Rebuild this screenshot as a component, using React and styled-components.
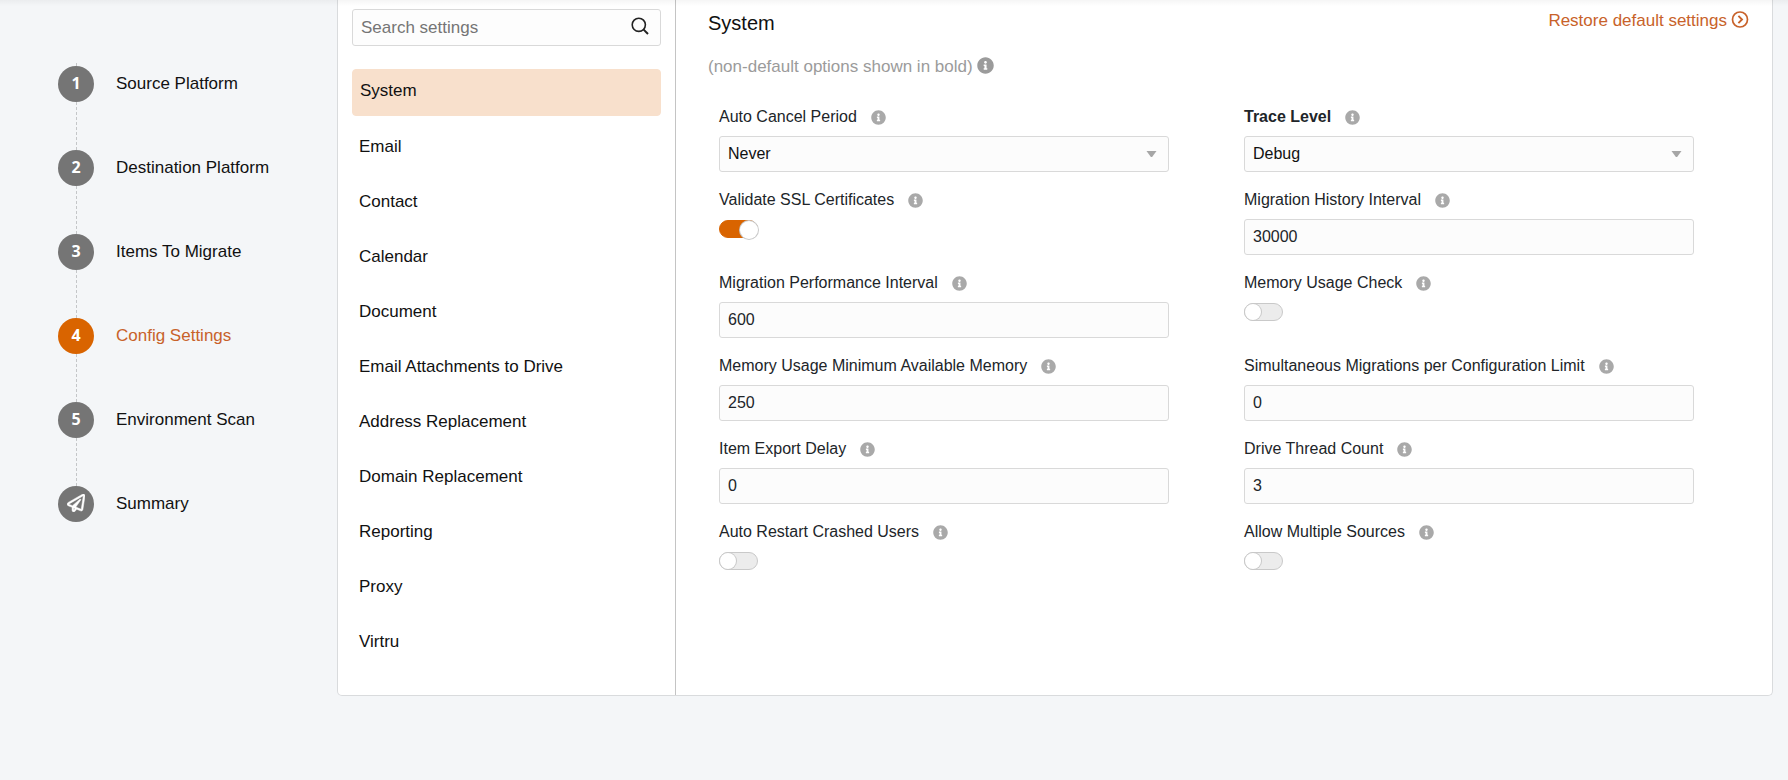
import React, { useState } from 'react'
import styled, { createGlobalStyle } from 'styled-components'
import { FaInfoCircle, FaRegPaperPlane } from 'react-icons/fa'

const GlobalStyle = createGlobalStyle`
  * {
    box-sizing: border-box;
  }

  body {
    margin: 0;
    background: #f4f6f8;
    color: #212529;
    font-family: "Liberation Sans", Arial, sans-serif;
    font-size: 17px;
    line-height: 20px;
  }

  button, input, select {
    font: inherit;
    color: inherit;
  }
`

const Page = styled.div`
  position: relative;
  display: flex;
  align-items: flex-start;
  min-height: 100vh;
  padding-right: 15px;
`

const TopShadow = styled.div`
  position: absolute;
  top: 0;
  left: 0;
  right: 0;
  height: 6px;
  background: linear-gradient(rgba(0, 0, 0, 0.04), rgba(0, 0, 0, 0));
  pointer-events: none;
`

const Steps = styled.ol`
  flex: 0 0 337px;
  display: flex;
  flex-direction: column;
  margin: 0;
  padding: 63px 0 0 58px;
  list-style: none;
`

const StepItem = styled.li`
  display: flex;
  flex-direction: column;
  align-items: flex-start;
`

const StepLine = styled.span`
  width: 1px;
  height: ${({ $short }) => ($short ? 3 : 48)}px;
  margin-left: 18px;
  background: repeating-linear-gradient(#c4c6c8 0 3px, transparent 3px 5px);
`

const StepLink = styled.a`
  display: flex;
  align-items: center;
  gap: 22px;
  color: ${({ $active }) => ($active ? '#c8622a' : '#111')};
  text-decoration: none;
`

const StepCircle = styled.span`
  display: flex;
  align-items: center;
  justify-content: center;
  width: 36px;
  height: 36px;
  padding-bottom: 2px;
  border-radius: 50%;
  background: ${({ $active }) => ($active ? '#d96400' : '#757575')};
  color: #fff;
  font-family: "Open Sans", sans-serif;
  font-size: 16px;
  font-weight: 700;
`

const Card = styled.main`
  flex: 1;
  display: flex;
  min-width: 0;
  border: 1px solid #d9dbdd;
  border-top: 0;
  border-radius: 0 0 5px 5px;
  background: #fff;
`

const Categories = styled.div`
  flex: 0 0 338px;
  padding: 9px 14px 29px;
  border-right: 1px solid #c4c4c4;
`

const SearchBox = styled.label`
  display: flex;
  align-items: center;
  height: 37px;
  padding: 0 11px 3px 8px;
  border: 1px solid #d9d9d9;
  border-radius: 3px;
  background: #fdfdfd;
`

const SearchInput = styled.input`
  flex: 1;
  min-width: 0;
  padding: 3px 0 0;
  border: 0;
  outline: 0;
  background: transparent;

  &::placeholder {
    color: #757575;
    opacity: 1;
  }
`

const CategoryList = styled.nav`
  display: flex;
  flex-direction: column;
  gap: 10px;
  margin-top: 23px;
`

const Category = styled.button`
  padding: 11px 7px 14px;
  border: ${({ $active }) => ($active ? '1px solid #f8e0cc' : '0')};
  border-radius: 4px;
  background: ${({ $active }) => ($active ? '#f8e0cc' : 'transparent')};
  color: #111;
  text-align: left;
  cursor: pointer;
`

const Panel = styled.section`
  flex: 1;
  min-width: 0;
  padding: 10px 14px 0 32px;
`

const PanelHead = styled.header`
  display: flex;
  align-items: flex-start;
  justify-content: space-between;
  padding-right: 9px;
`

const Title = styled.h1`
  margin: 0;
  color: #111;
  font-size: 20px;
  font-weight: 400;
  line-height: 26px;
`

const RestoreLink = styled.a`
  display: flex;
  align-items: flex-start;
  gap: 4px;
  color: #c8622a;
  line-height: 22px;
  text-decoration: none;
`

const Hint = styled.p`
  display: flex;
  align-items: flex-start;
  gap: 4px;
  margin: 21px 0 30px;
  color: #9b9b9b;
`

const Fields = styled.form`
  display: grid;
  grid-template-columns: 1fr 1fr;
  row-gap: 18px;
`

const FieldBox = styled.div`
  min-height: 65px;
  padding: 0 64px 0 11px;
  font-size: 16px;
`

const LabelRow = styled.div`
  display: flex;
  align-items: center;
  gap: 14px;
  margin-bottom: 9px;
  color: #212529;
  font-weight: ${({ $bold }) => ($bold ? 700 : 400)};

  svg {
    color: #a9a9a9;
  }
`

const TextInput = styled.input`
  display: block;
  width: 100%;
  height: 36px;
  padding: 0 8px;
  border: 1px solid #d9d9d9;
  border-radius: 3px;
  background: #fcfcfc;
`

const SelectWrap = styled.div`
  display: flex;
  align-items: center;
  border: 1px solid #d9d9d9;
  border-radius: 3px;
  background: #fcfcfc;
`

const Select = styled.select`
  flex: 1;
  height: 34px;
  padding: 0 8px;
  border: 0;
  appearance: none;
  background: transparent;
  color: #111;
`

const Caret = styled.svg`
  flex: none;
  margin-right: 11px;
  pointer-events: none;
`

const Toggle = styled.input`
  appearance: none;
  display: flex;
  align-items: center;
  width: 39px;
  height: 18px;
  margin: 10px 0 0;
  border: 1px solid #c9c9c9;
  border-radius: 9px;
  background: #ececec;
  cursor: pointer;

  &::before {
    content: "";
    flex: none;
    width: 16px;
    height: 16px;
    border-radius: 50%;
    background: #fff;
    box-shadow: 0 0 0 1px #c9c9c9;
  }

  &:checked {
    border-color: #d96400;
    background: #d96400;
  }

  &:checked::before {
    width: 18px;
    height: 18px;
    margin: 2px 0 0 20px;
  }
`

const steps = [
  { label: 'Source Platform' },
  { label: 'Destination Platform' },
  { label: 'Items To Migrate' },
  { label: 'Config Settings', active: true },
  { label: 'Environment Scan' },
  { label: 'Summary', icon: <FaRegPaperPlane size={18} stroke="#fff" strokeWidth={14} /> },
]

const categories = [
  'System',
  'Email',
  'Contact',
  'Calendar',
  'Document',
  'Email Attachments to Drive',
  'Address Replacement',
  'Domain Replacement',
  'Reporting',
  'Proxy',
  'Virtru',
]

const fields = [
  { id: 'autoCancel', label: 'Auto Cancel Period', type: 'select', value: 'Never' },
  { id: 'traceLevel', label: 'Trace Level', type: 'select', value: 'Debug', bold: true },
  { id: 'validateSsl', label: 'Validate SSL Certificates', type: 'toggle', value: true },
  { id: 'historyInterval', label: 'Migration History Interval', value: '30000' },
  { id: 'performanceInterval', label: 'Migration Performance Interval', value: '600' },
  { id: 'memoryCheck', label: 'Memory Usage Check', type: 'toggle', value: false },
  { id: 'minMemory', label: 'Memory Usage Minimum Available Memory', value: '250' },
  { id: 'migrationLimit', label: 'Simultaneous Migrations per Configuration Limit', value: '0' },
  { id: 'exportDelay', label: 'Item Export Delay', value: '0' },
  { id: 'driveThreads', label: 'Drive Thread Count', value: '3' },
  { id: 'autoRestart', label: 'Auto Restart Crashed Users', type: 'toggle', value: false },
  { id: 'multipleSources', label: 'Allow Multiple Sources', type: 'toggle', value: false },
]

const SearchIcon = () => (
  <svg width="18" height="18" viewBox="0 0 18 18" fill="none" stroke="#222" strokeWidth="1.6" aria-hidden="true">
    <circle cx="7.8" cy="7.8" r="6.6" />
    <path d="M12.4 12.4L17 17" strokeWidth="2" />
  </svg>
)

const CircleChevron = () => (
  <svg width="18" height="18" viewBox="0 0 18 18" fill="none" stroke="currentColor" strokeWidth="1.7" aria-hidden="true">
    <circle cx="9" cy="9.5" r="7.5" />
    <path d="M7.4 5.9L11 9.5L7.4 13.1" strokeWidth="1.9" />
  </svg>
)

const Control = ({ id, type, value }) => {
  if (type === 'toggle') {
    return <Toggle type="checkbox" role="switch" id={id} defaultChecked={value} />
  }

  if (type === 'select') {
    return (
      <SelectWrap>
        <Select id={id} defaultValue={value}>
          <option>{value}</option>
        </Select>
        <Caret width="11" height="6" viewBox="0 0 11 6" aria-hidden="true">
          <path d="M0.5 0H10.5L6.5 5.4Q5.5 6.4 4.5 5.4Z" fill="#a6a6a6" />
        </Caret>
      </SelectWrap>
    )
  }

  return <TextInput type="text" id={id} defaultValue={value} />
}

const Field = ({ field }) => (
  <FieldBox>
    <LabelRow $bold={field.bold}>
      <label htmlFor={field.id}>{field.label}</label>
      <FaInfoCircle size={15} />
    </LabelRow>
    <Control {...field} />
  </FieldBox>
)

const App = () => {
  const [category, setCategory] = useState('System')

  return (
    <>
      <GlobalStyle />
      <Page>
        <Steps>
          {steps.map((step, index) => (
            <StepItem key={step.label}>
              <StepLine $short={index === 0} />
              <StepLink href="#" $active={step.active}>
                <StepCircle $active={step.active}>{step.icon || index + 1}</StepCircle>
                {step.label}
              </StepLink>
            </StepItem>
          ))}
        </Steps>

        <Card>
          <Categories>
            <SearchBox>
              <SearchInput type="text" placeholder="Search settings" aria-label="Search settings" />
              <SearchIcon />
            </SearchBox>
            <CategoryList>
              {categories.map((name) => (
                <Category
                  key={name}
                  type="button"
                  $active={name === category}
                  onClick={() => setCategory(name)}
                >
                  {name}
                </Category>
              ))}
            </CategoryList>
          </Categories>

          <Panel>
            <PanelHead>
              <Title>{category}</Title>
              <RestoreLink href="#">
                Restore default settings
                <CircleChevron />
              </RestoreLink>
            </PanelHead>
            <Hint>
              (non-default options shown in bold)
              <FaInfoCircle size={17} />
            </Hint>
            <Fields>
              {fields.map((field) => (
                <Field field={field} key={field.id} />
              ))}
            </Fields>
          </Panel>
        </Card>
        <TopShadow />
      </Page>
    </>
  )
}

export default App
